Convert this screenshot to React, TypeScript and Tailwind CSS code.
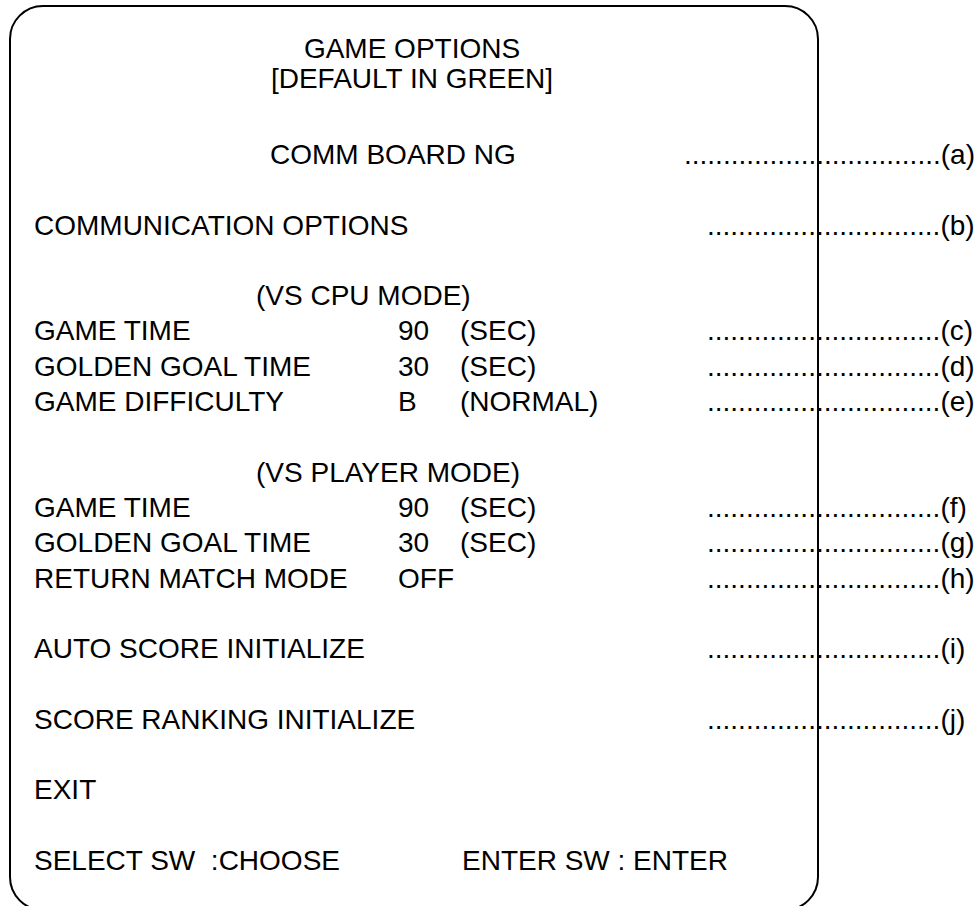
import React from 'react';

type Row = {
  label: string;
  value?: string;
  unit?: string;
  tag?: string;
  indent?: string;
  spaced?: boolean;
};

// leader dots between the option text and its callout letter
const DOTS = '..............................';

const rows: Row[] = [
  { label: 'COMMUNICATION OPTIONS', tag: '(b)', spaced: true },
  { label: '(VS CPU MODE)', indent: 'pl-[222px]', spaced: true },
  { label: 'GAME TIME', value: '90', unit: '(SEC)', tag: '(c)' },
  { label: 'GOLDEN GOAL TIME', value: '30', unit: '(SEC)', tag: '(d)' },
  { label: 'GAME DIFFICULTY', value: 'B', unit: '(NORMAL)', tag: '(e)' },
  { label: '(VS PLAYER MODE)', indent: 'pl-[222px]', spaced: true },
  { label: 'GAME TIME', value: '90', unit: '(SEC)', tag: '(f)' },
  { label: 'GOLDEN GOAL TIME', value: '30', unit: '(SEC)', tag: '(g)' },
  { label: 'RETURN MATCH MODE', value: 'OFF', tag: '(h)' },
  { label: 'AUTO SCORE INITIALIZE', tag: '(i)', spaced: true },
  { label: 'SCORE RANKING INITIALIZE', tag: '(j)', spaced: true },
  { label: 'EXIT', spaced: true }
];

function OptionRow({ row }: { row: Row }) {
  return (
    <div
      className={`flex h-[35.3px] whitespace-nowrap leading-[35.3px] ${row.spaced ? 'mt-[35.3px]' : ''}`}
    >
      <div className={`flex w-[673px] shrink-0 ${row.indent ?? ''}`}>
        {row.value !== undefined ? (
          <>
            <span className="w-[364px] shrink-0">{row.label}</span>
            <span className="w-[62px] shrink-0">{row.value}</span>
            <span>{row.unit}</span>
          </>
        ) : (
          <span>{row.label}</span>
        )}
      </div>
      {row.tag ? (
        <span>
          {DOTS}
          {row.tag}
        </span>
      ) : null}
    </div>
  );
}

export default function App() {
  return (
    <div className="h-[906px] w-[980px] overflow-hidden bg-white font-['Liberation_Sans',Arial,sans-serif] text-[28px] text-black">
      <div className="ml-[9px] mt-[5px] h-[906px] w-[810px] rounded-[34px] border-2 border-black pl-[23px] pt-[27px]">
        <div className="w-[756px] text-center leading-[30px]">
          <p>GAME OPTIONS</p>
          <p>[DEFAULT IN GREEN]</p>
        </div>

        <div className="mt-[43px] flex h-[35.3px] whitespace-nowrap leading-[35.3px]">
          <div className="w-[650px] shrink-0 pl-[236px]">COMM BOARD NG</div>
          <span>
            {'...'}
            {DOTS}
            {'(a)'}
          </span>
        </div>

        {rows.map((row, i) => (
          <OptionRow key={i} row={row} />
        ))}

        <div className="mt-[35.3px] flex h-[35.3px] whitespace-pre leading-[35.3px]">
          <span className="w-[428px] shrink-0">SELECT SW  :CHOOSE</span>
          <span>ENTER SW : ENTER</span>
        </div>
      </div>
    </div>
  );
}
